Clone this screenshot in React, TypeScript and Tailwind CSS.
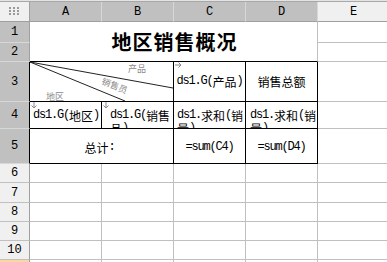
import React from "react";

const MONO = "font-['Liberation_Mono','Noto_Sans_CJK_SC',monospace]";

function Mixed({ text }: { text: string }) {
  const parts = text.match(/[\x00-\x7f]+|[^\x00-\x7f]+/g) || [];
  return (
    <>
      {parts.map((p, i) =>
        /^[\x00-\x7f]+$/.test(p) ? (
          <span key={i} className="align-top leading-[13px] font-['Liberation_Mono',monospace] tracking-[-1.2px]">
            {p}
          </span>
        ) : (
          <span key={i} className="align-top leading-[13px] font-['Noto_Sans_CJK_SC',sans-serif]">
            {p}
          </span>
        )
      )}
    </>
  );
}

function DownArrow() {
  return (
    <svg className="absolute left-[1px] top-[0px]" width="6" height="7" viewBox="0 0 6 7">
      <path d="M3 0 V6 M0.5 3.5 L3 6 L5.5 3.5" stroke="#8a8a8a" strokeWidth="1" fill="none" />
    </svg>
  );
}

function RightArrow() {
  return (
    <svg className="absolute left-[1px] top-[0px]" width="7" height="6" viewBox="0 0 7 6">
      <path d="M0 3 H6 M3.5 0.5 L6 3 L3.5 5.5" stroke="#8a8a8a" strokeWidth="1" fill="none" />
    </svg>
  );
}

export default function App() {
  const rowHead = "flex items-center justify-center border-r border-b text-[12px] text-black " + MONO;
  const selHead = rowHead + " bg-[#c0c0c0] border-b-[#d8d8d8] border-r-[#a0a0a0]";
  const lightHead = rowHead + " bg-[#f0f0f0] border-b-[#c0c0c0] border-r-[#a0a0a0]";
  const colSel = "flex items-center justify-center bg-[#c0c0c0] border-r border-r-[#d8d8d8] border-b border-b-[#a0a0a0] text-[12px] text-black " + MONO;
  const gridCell = "border-r border-b border-[#c0c0c0] bg-white";
  const blk = "border-r border-b border-black bg-white relative text-[12px] text-black overflow-hidden";
  const wrapCell = blk + " block leading-[13px] pt-[7px] break-all";

  return (
    <div className="w-[387px] h-[262px] overflow-hidden bg-white">
      <div className="h-[1px] bg-[#e4e4e4]" />
      <div className="h-[1px] bg-[#a8a8a8]" />
      <div className="grid grid-cols-[30px_72px_72px_72px_72px_72px] grid-rows-[20px_21px_19px_40px_27px_35px_19px_20px_19px_19px_19px_20px] w-[390px]">
        {/* header row */}
        <div className="flex items-center justify-center bg-[#f0f0f0] border-r border-b border-r-[#a0a0a0] border-b-[#a0a0a0]">
          <svg width="11" height="9" viewBox="0 0 11 9">
            {[0, 4, 8].map((x) =>
              [0, 3, 6].map((y) => <rect key={x + "-" + y} x={x} y={y} width="2" height="2" fill="#9a9a9a" />)
            )}
          </svg>
        </div>
        <div className={colSel}>A</div>
        <div className={colSel}>B</div>
        <div className={colSel}>C</div>
        <div className={colSel}>D</div>
        <div className={"flex items-center justify-center bg-[#f0f0f0] border-b border-b-[#a0a0a0] border-r border-r-[#c0c0c0] text-[12px] text-black " + MONO}>E</div>

        {/* row 1 & 2 */}
        <div className={selHead + " col-start-1 row-start-2"}>1</div>
        <div className={selHead + " col-start-1 row-start-3"}>2</div>
        <div className="col-start-2 col-span-4 row-start-2 row-span-2 bg-white border-r border-r-[#c0c0c0] border-b border-b-black flex items-center justify-center">
          <span className="font-['Noto_Sans_CJK_SC',sans-serif] font-bold text-[20px] leading-none text-black tracking-[1px] ml-[2px]">
            地区销售概况
          </span>
        </div>
        <div className={gridCell + " col-start-6 row-start-2"} />
        <div className={gridCell + " col-start-6 row-start-3"} />

        {/* row 3 */}
        <div className={selHead + " col-start-1 row-start-4 border-r-black"}>3</div>
        <div className={blk + " col-start-2 col-span-2 row-start-4"}>
          <svg className="absolute left-0 top-0" width="143" height="39" viewBox="0 0 143 39">
            <line x1="0" y1="0" x2="143" y2="26" stroke="#222" strokeWidth="1" />
            <line x1="0" y1="0" x2="95" y2="39" stroke="#222" strokeWidth="1" />
          </svg>
          <span className="absolute left-[98px] top-[1px] text-[9px] leading-[12px] text-[#8a8a8a] font-['Noto_Sans_CJK_SC',sans-serif]">产品</span>
          <span className="absolute left-[71px] top-[18px] text-[9px] leading-[12px] text-[#8a8a8a] font-['Noto_Sans_CJK_SC',sans-serif] rotate-[22deg] origin-center">销售员</span>
          <span className="absolute left-[16px] top-[29px] text-[9px] leading-[12px] text-[#8a8a8a] font-['Noto_Sans_CJK_SC',sans-serif]">地区</span>
        </div>
        <div className={blk + " col-start-4 row-start-4 flex items-center justify-center"}>
          <RightArrow />
          <span className="leading-[13px]"><Mixed text="ds1.G(产品)" /></span>
        </div>
        <div className={blk + " col-start-5 row-start-4 flex items-center justify-center"}>
          <span className="leading-[13px]"><Mixed text="销售总额" /></span>
        </div>
        <div className={gridCell + " col-start-6 row-start-4"} />

        {/* row 4 */}
        <div className={selHead + " col-start-1 row-start-5 border-r-black"}>4</div>
        <div className={wrapCell + " col-start-2 row-start-5 pl-[3px]"}>
          <DownArrow />
          <Mixed text="ds1.G(地区)" />
        </div>
        <div className={wrapCell + " col-start-3 row-start-5 pl-[8px]"}>
          <DownArrow />
          <Mixed text="ds1.G(销售品)" />
        </div>
        <div className={wrapCell + " col-start-4 row-start-5 pl-[3px] pr-[1px]"}>
          <Mixed text="ds1.求和(销量)" />
        </div>
        <div className={wrapCell + " col-start-5 row-start-5 pl-[4px]"}>
          <Mixed text="ds1.求和(销量)" />
        </div>
        <div className={gridCell + " col-start-6 row-start-5"} />

        {/* row 5 */}
        <div className={selHead + " col-start-1 row-start-6 border-r-black"}>5</div>
        <div className={blk + " col-start-2 col-span-2 row-start-6 flex items-center justify-center pt-[3px]"}>
          <span className="leading-[13px] ml-[-4px]"><Mixed text="总计:" /></span>
        </div>
        <div className={blk + " col-start-4 row-start-6 flex items-center justify-center pt-[2px]"}>
          <span className="leading-[13px]"><Mixed text="=sum(C4)" /></span>
        </div>
        <div className={blk + " col-start-5 row-start-6 flex items-center justify-center pt-[2px]"}>
          <span className="leading-[13px]"><Mixed text="=sum(D4)" /></span>
        </div>
        <div className={gridCell + " col-start-6 row-start-6"} />

        {/* rows 6-10 */}
        {[6, 7, 8, 9, 10].map((r) => (
          <React.Fragment key={r}>
            <div className={lightHead}>{r}</div>
            <div className={gridCell} />
            <div className={gridCell} />
            <div className={gridCell} />
            <div className={gridCell} />
            <div className={gridCell} />
          </React.Fragment>
        ))}

        {/* row 11 */}
        <div className="bg-[#fbd7a0] border-r border-r-[#a0a0a0]" />
        <div className={gridCell} />
        <div className={gridCell} />
        <div className={gridCell} />
        <div className={gridCell} />
        <div className={gridCell} />
      </div>
    </div>
  );
}
